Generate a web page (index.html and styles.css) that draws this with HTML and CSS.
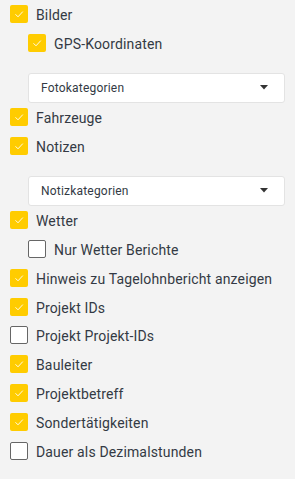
FILE: index.html
```html
<!DOCTYPE html>
<html>
<head>
<meta charset="utf-8">
<link rel="stylesheet" href="styles.css">
</head>
<body>
<div class="panel">
  <label class="row"><span class="box on"><svg viewBox="0 0 18 18"><polyline points="5.5,9.3 8,11.8 12.8,6.6"/></svg></span><span class="txt">Bilder</span></label>
  <label class="row sub"><span class="box on"><svg viewBox="0 0 18 18"><polyline points="5.5,9.3 8,11.8 12.8,6.6"/></svg></span><span class="txt">GPS-Koordinaten</span></label>
  <div class="select sub"><span>Fotokategorien</span><svg class="caret" viewBox="0 0 8 5"><polygon points="0,0 8,0 4,4.5"/></svg></div>
  <label class="row"><span class="box on"><svg viewBox="0 0 18 18"><polyline points="5.5,9.3 8,11.8 12.8,6.6"/></svg></span><span class="txt">Fahrzeuge</span></label>
  <label class="row"><span class="box on"><svg viewBox="0 0 18 18"><polyline points="5.5,9.3 8,11.8 12.8,6.6"/></svg></span><span class="txt">Notizen</span></label>
  <div class="select sub"><span>Notizkategorien</span><svg class="caret" viewBox="0 0 8 5"><polygon points="0,0 8,0 4,4.5"/></svg></div>
  <label class="row"><span class="box on"><svg viewBox="0 0 18 18"><polyline points="5.5,9.3 8,11.8 12.8,6.6"/></svg></span><span class="txt">Wetter</span></label>
  <label class="row sub"><span class="box"></span><span class="txt">Nur Wetter Berichte</span></label>
  <label class="row"><span class="box on"><svg viewBox="0 0 18 18"><polyline points="5.5,9.3 8,11.8 12.8,6.6"/></svg></span><span class="txt">Hinweis zu Tagelohnbericht anzeigen</span></label>
  <label class="row"><span class="box on"><svg viewBox="0 0 18 18"><polyline points="5.5,9.3 8,11.8 12.8,6.6"/></svg></span><span class="txt">Projekt IDs</span></label>
  <label class="row"><span class="box"></span><span class="txt">Projekt Projekt-IDs</span></label>
  <label class="row"><span class="box on"><svg viewBox="0 0 18 18"><polyline points="5.5,9.3 8,11.8 12.8,6.6"/></svg></span><span class="txt">Bauleiter</span></label>
  <label class="row"><span class="box on"><svg viewBox="0 0 18 18"><polyline points="5.5,9.3 8,11.8 12.8,6.6"/></svg></span><span class="txt">Projektbetreff</span></label>
  <label class="row"><span class="box on"><svg viewBox="0 0 18 18"><polyline points="5.5,9.3 8,11.8 12.8,6.6"/></svg></span><span class="txt">Sondertätigkeiten</span></label>
  <label class="row"><span class="box"></span><span class="txt">Dauer als Dezimalstunden</span></label>
</div>
</body>
</html>
```
FILE: styles.css
```css
html, body {
  margin: 0;
  padding: 0;
  background: #f3f3f3;
}
body {
  font-family: Roboto, "Liberation Sans", sans-serif;
  color: #333a44;
  width: 295px;
  height: 479px;
  overflow: hidden;
}
.panel {
  display: flex;
  flex-direction: column;
  padding: 0 10px;
}
.row {
  display: flex;
  align-items: center;
  height: 28.875px;
  gap: 8px;
  font-size: 14px;
  letter-spacing: 0.15px;
}
.sub {
  margin-left: 18px;
}
.box {
  width: 18px;
  height: 18px;
  box-sizing: border-box;
  border-radius: 2px;
  background: #fff;
  border: 1px solid #666;
  flex: none;
  display: flex;
}
.box.on {
  background: #ffcc00;
  border: none;
}
.box svg {
  width: 18px;
  height: 18px;
}
.box polyline {
  fill: none;
  stroke: #fff;
  stroke-width: 1;
  opacity: 0.9;
}
.txt {
  padding-top: 2px;
}
.select {
  margin-top: 15px;
  height: 30px;
  box-sizing: border-box;
  background: #fff;
  border: 1px solid #e3e3e3;
  border-radius: 3px;
  display: flex;
  align-items: center;
  justify-content: space-between;
  padding: 0 16px 0 12px;
  font-size: 12px;
  letter-spacing: 0.2px;
  color: #333a44;
}
.caret {
  width: 8px;
  height: 5px;
  fill: #333;
}
```
